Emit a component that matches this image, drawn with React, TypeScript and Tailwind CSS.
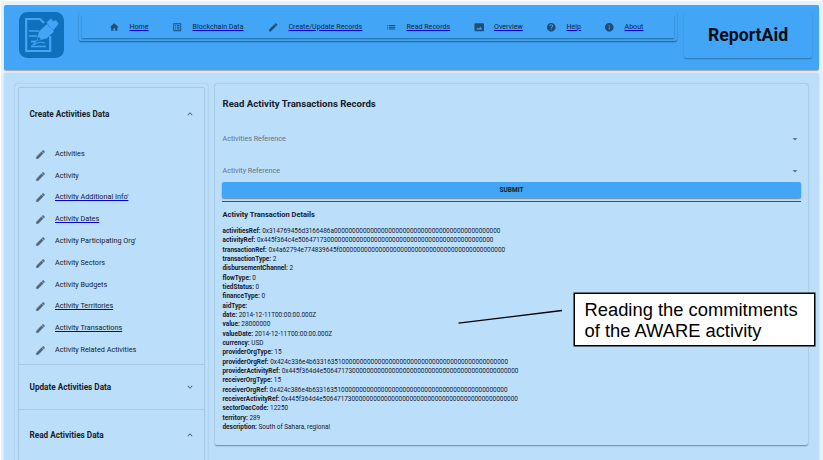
import React from "react";
import {
  MdArrowDropDown,
  MdExpandLess,
  MdExpandMore,
  MdHelp,
  MdHome,
  MdInfo,
  MdList,
  MdListAlt,
  MdPhotoSizeSelectActual,
} from "react-icons/md";

function Pencil({ className }: { className?: string }) {
  return (
    <svg className={className} viewBox="0 0 24 24" fill="currentColor" stroke="currentColor" strokeWidth="0.8">
      <path d="M3 17.250V21h3.750L17.810 9.940l-3.750-3.750L3 17.250zM20.710 7.040c.39-.39.39-1.020 0-1.410l-2.340-2.340c-.39-.39-1.020-.39-1.410 0l-1.830 1.830 3.750 3.750 1.830-1.830z" />
    </svg>
  );
}

const navItems = [
  { label: "Home", icon: MdHome, box: "w-[63px]" },
  { label: "Blockchain Data", icon: MdListAlt, box: "w-[96px]" },
  { label: "Create/Update Records", icon: Pencil, box: "w-[118px]" },
  { label: "Read Records", icon: MdList, box: "w-[87.500px]" },
  { label: "Overview", icon: MdPhotoSizeSelectActual, box: "w-[72.500px]" },
  { label: "Help", icon: MdHelp, box: "w-[58px]" },
  { label: "About", icon: MdInfo, box: "w-[50px]" },
];

const createItems = [
  { label: "Activities", link: false },
  { label: "Activity", link: false },
  { label: "Activity Additional Info'", link: true },
  { label: "Activity Dates", link: true },
  { label: "Activity Participating Org'", link: false },
  { label: "Activity Sectors", link: false },
  { label: "Activity Budgets", link: false },
  { label: "Activity Territories", link: true },
  { label: "Activity Transactions", link: true },
  { label: "Activity Related Activities", link: false },
];

const bytes32 = (prefix: string) => prefix.padEnd(66, "0");

const details: [string, string][] = [
  ["activitiesRef:", bytes32("0x314769456d3166486a")],
  ["activityRef:", bytes32("0x445f364c4e50647173")],
  ["transactionRef:", bytes32("0x4a62794e774839645f")],
  ["transactionType:", "2"],
  ["disbursementChannel:", "2"],
  ["flowType:", "0"],
  ["tiedStatus:", "0"],
  ["financeType:", "0"],
  ["aidType:", ""],
  ["date:", "2014-12-11T00:00:00.000Z"],
  ["value:", "28000000"],
  ["valueDate:", "2014-12-11T00:00:00.000Z"],
  ["currency:", "USD"],
  ["providerOrgType:", "15"],
  ["providerOrgRef:", bytes32("0x424c336e4b63316351")],
  ["providerActivityRef:", bytes32("0x445f364d4e50647173")],
  ["receiverOrgType:", "15"],
  ["receiverOrgRef:", bytes32("0x424c386e4b63316351")],
  ["receiverActivityRef:", bytes32("0x445f364d4e50647173")],
  ["sectorDacCode:", "12250"],
  ["territory:", "289"],
  ["description:", "South of Sahara, regional"],
];

function Logo() {
  return (
    <svg className="h-[46px] w-[45px] shrink-0" viewBox="0 0 45 46">
      <rect width="45" height="46" rx="8.5" fill="#0f70bb" />
      <path d="M25 11l-4-4H7.200v32h24V24" fill="none" stroke="#42a5f5" strokeWidth="2.200" />
      <path d="M10 19h10M10 24h8M12 29.500h5M12 34.500h15" fill="none" stroke="#42a5f5" strokeWidth="1.500" />
      <path d="M12 30l5-1-3 4 7-3 5 1" fill="none" stroke="#42a5f5" strokeWidth="1.100" />
      <path d="M17.500 29l2.500-9.500 8-7.500 7 7.500-7.500 7z" fill="#42a5f5" />
      <path d="M27.500 10.500L32 6.500l2.500 3 2.500-1.500 2.500 4-5.500 6.500z" fill="#42a5f5" />
      <path d="M18 28.700l1.500-4 2.500 2.600z" fill="#0f70bb" />
    </svg>
  );
}

function Header() {
  return (
    <header className="flex h-[65px] shrink-0 items-start rounded-[2px] bg-[#42a5f5] pl-[15px] pr-[7px] pt-[7px] shadow-[0_1px_1px_#00000050]">
      <Logo />
      <div className="ml-[15px] h-[29px] w-[598px] rounded-[2px] px-[3px] pt-[3px] shadow-[0_1px_1.5px_#00000070]">
        <nav className="flex h-[23px] items-center pl-[27px] pt-[1px] shadow-[0_1px_1.5px_#00000060]">
          {navItems.map(({ label, icon: Icon, box }) => (
            <a key={label} className={`flex shrink-0 items-center ${box}`}>
              <Icon className="mr-[10px] size-[10.500px] shrink-0 text-[#1f4d75]" />
              <span className="whitespace-nowrap text-[7.100px] text-[#10253a] underline decoration-[#0000ee]">
                {label}
              </span>
            </a>
          ))}
        </nav>
      </div>
      <div className="ml-auto flex h-[46px] w-[128px] items-center justify-center rounded-[2px] pt-[1px] text-[17.700px] font-bold text-[#040d15] shadow-[0_1px_1.5px_#00000048]">
        ReportAid
      </div>
    </header>
  );
}

function PanelTitle({ title, open }: { title: string; open: boolean }) {
  const Chevron = open ? MdExpandLess : MdExpandMore;
  return (
    <div className="flex w-full items-center justify-between pl-[10.500px] pr-[9.500px]">
      <span className="text-[8.200px] font-bold text-[#17212a]">{title}</span>
      <Chevron className="size-[10px] text-[#52677a]" />
    </div>
  );
}

function Sidebar() {
  return (
    <aside className="h-[400px] w-[193px] shrink-0 rounded-[2px] px-[4px] pt-[4px] shadow-[0_0_1.5px_#00000040]">
      <div className="h-[400px] shadow-[0_0_1.5px_#00000060]">
        <section className="h-[277px] border-b border-[#a8c8e2]">
          <div className="flex h-[52px] items-center">
            <PanelTitle title="Create Activities Data" open />
          </div>
          <ul className="pt-[3.500px]">
            {createItems.map(({ label, link }) => (
              <li key={label} className="flex h-[21.780px] items-center pl-[16px]">
                <Pencil className="mr-[9px] size-[11px] shrink-0 text-[#52677a]" />
                <span
                  className={
                    link
                      ? "whitespace-nowrap text-[7.260px] text-[#17212a] underline decoration-[#0000ee]"
                      : "whitespace-nowrap text-[7.260px] text-[#17212a]"
                  }
                >
                  {label}
                </span>
              </li>
            ))}
          </ul>
        </section>
        <section className="flex h-[45px] items-center border-b border-[#abcbe5] pt-[1px]">
          <PanelTitle title="Update Activities Data" open={false} />
        </section>
        <section className="flex h-[51px] items-center">
          <PanelTitle title="Read Activities Data" open />
        </section>
      </div>
    </aside>
  );
}

function SelectRow({ label }: { label: string }) {
  return (
    <div className="flex h-[12px] items-center justify-between text-[7.200px] text-[#607486]">
      <span>{label}</span>
      <MdArrowDropDown className="size-[12px]" />
    </div>
  );
}

function Records() {
  return (
    <main className="ml-[7px] h-[361px] w-[593px] shrink-0 rounded-[2px] pl-[7px] pr-[7px] pt-[14px] shadow-[0_0.500px_1.5px_#00000068]">
      <h1 className="h-[12px] pl-[0.500px] text-[9.620px] font-bold leading-[12px] text-[#17212a]">
        Read Activity Transactions Records
      </h1>
      <div className="mt-[23px] pl-[0.500px]">
        <SelectRow label="Activities Reference" />
      </div>
      <div className="mt-[20px] pl-[0.500px]">
        <SelectRow label="Activity Reference" />
      </div>
      <button className="mt-[5px] flex h-[16px] w-full items-center justify-center rounded-[2px] bg-[#42a5f5] pt-[1px] text-[6.500px] font-bold text-[#0a1c2c] shadow-[0_1px_1.5px_#00000066]">
        SUBMIT
      </button>
      <hr className="mt-[3px] border-0 border-t border-[#46535e]" />
      <h2 className="mt-[8px] h-[10px] pl-[0.500px] text-[7.500px] font-bold leading-[10px] text-[#17212a]">
        Activity Transaction Details
      </h2>
      <dl className="mt-[7px] pl-[0.500px] text-[6.450px] leading-[9.330px]">
        {details.map(([key, value]) => (
          <div key={key} className="flex h-[9.330px] gap-[1.600px] whitespace-nowrap">
            <dt className="font-bold text-[#16202a]">{key}</dt>
            <dd className="text-[#15202f]">{value}</dd>
          </div>
        ))}
      </dl>
    </main>
  );
}

export default function App() {
  return (
    <div className="relative h-[460px] w-[823px] overflow-hidden bg-white pl-px pt-px font-[Roboto,sans-serif]">
      <div className="flex h-[459px] flex-col bg-[#e3f2fd] pl-[3px] pr-[4px] pt-[4px]">
        <Header />
        <div className="mt-[3px] flex h-[400px] shrink-0 items-start rounded-[2px] bg-[#bbdefb] pl-[11px] pt-[11px] shadow-[0_0_2px_#00000028]">
          <Sidebar />
          <Records />
        </div>
      </div>
      <svg className="absolute left-[457px] top-[308px] h-[18px] w-[107px]" viewBox="0 0 107 18">
        <path d="M1.500 15.200L105 2.500" stroke="#000" strokeWidth="1.300" />
      </svg>
      <div className="absolute left-[573.500px] top-[293px] h-[53px] w-[241px] whitespace-nowrap border border-black bg-white pl-[10px] pt-[5px] font-['Liberation_Sans',Arial,sans-serif] text-[18.350px] leading-[21px] text-black shadow-[0_0_0_0.500px_#000000]">
        Reading the commitments
        <br />
        of the AWARE activity
      </div>
    </div>
  );
}
